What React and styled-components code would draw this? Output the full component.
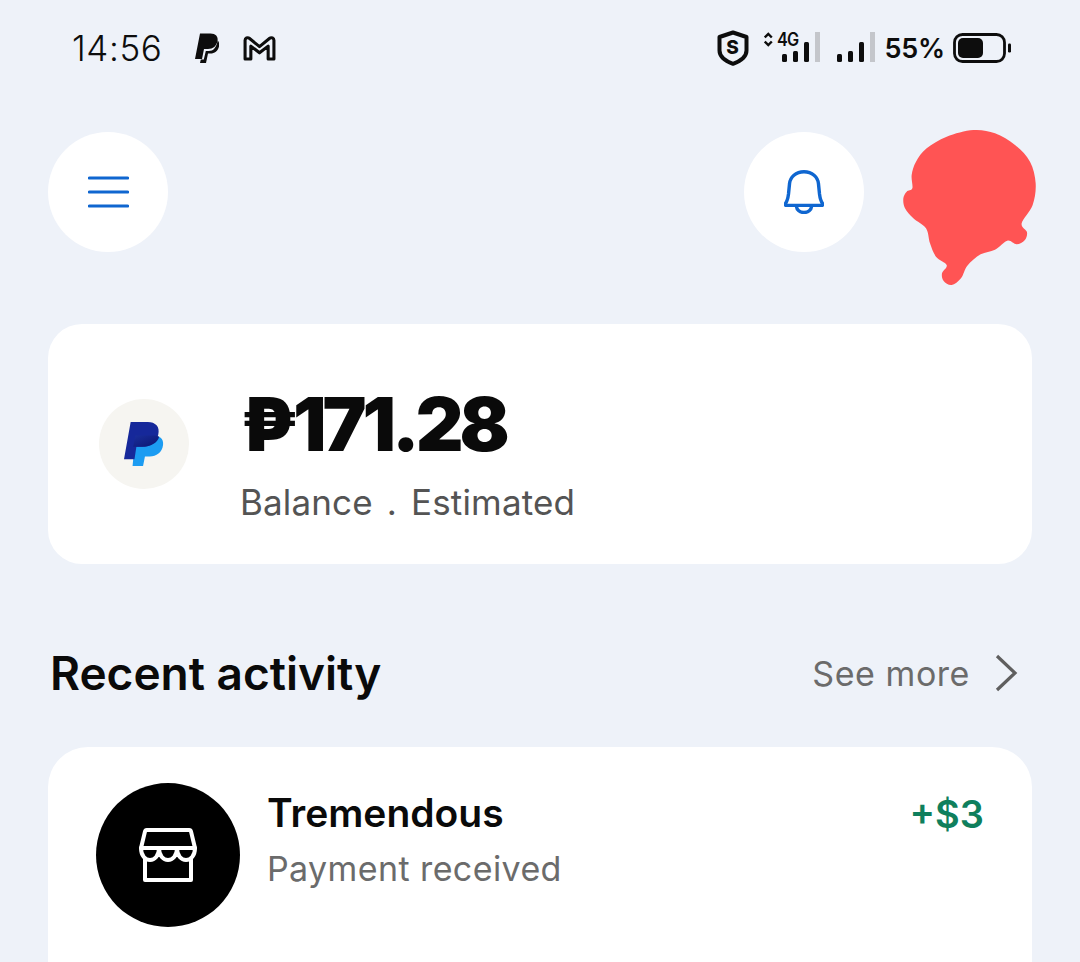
import React from "react";
import styled, { createGlobalStyle } from "styled-components";

const Global = createGlobalStyle`
  html, body { margin: 0; padding: 0; background: #eef2f9; }
  body { font-family: Inter, "Noto Sans", sans-serif; overflow: hidden; }
`;

const Screen = styled.div`
  width: 1080px;
  height: 962px;
  overflow: hidden;
  background: #eef2f9;
  display: flex;
  flex-direction: column;
`;

const StatusBar = styled.div`
  height: 96px;
  flex: none;
  display: flex;
  align-items: center;
  justify-content: space-between;
  padding: 0 68px 0 72px;
  color: #0d0d0d;
`;

const StatusLeft = styled.div`
  display: flex;
  align-items: center;
  gap: 24px;
`;

const StatusRight = styled.div`
  display: flex;
  align-items: center;
`;

const Clock = styled.span`
  font-size: 35px;
  font-weight: 300;
  letter-spacing: 0.6px;
  margin-right: 9px;
`;

const BatteryText = styled.span`
  font-size: 27px;
  font-weight: 600;
  letter-spacing: -0.2px;
  margin: 0 8px 0 10px;
`;

const Shield = styled.span`
  position: relative;
  width: 32px;
  height: 36px;
  display: flex;
  align-items: center;
  justify-content: center;
  margin-right: 15px;

  svg { position: absolute; inset: 0; }
`;

const ShieldLetter = styled.span`
  position: relative;
  font-size: 19px;
  font-weight: 800;
  line-height: 1;
  margin-top: -2px;
`;

const Network = styled.span`
  position: relative;
  width: 56px;
  height: 36px;
  margin-right: 16px;

  svg { position: absolute; inset: 0; }
`;

const NetworkLabel = styled.span`
  position: absolute;
  left: 13px;
  top: 0;
  font-size: 18px;
  font-weight: 600;
  line-height: 20px;
  letter-spacing: -1px;
  transform: scaleX(0.9);
  transform-origin: left center;
`;

const Header = styled.header`
  flex: none;
  margin-top: 36px;
  padding: 0 48px;
  display: flex;
  align-items: center;
  gap: 48px;
`;

const RoundButton = styled.button`
  width: 120px;
  height: 120px;
  flex: none;
  border: none;
  padding: 0;
  border-radius: 50%;
  background: #fff;
  display: flex;
  align-items: center;
  justify-content: center;
  margin-right: ${(p) => (p.$push ? "auto" : 0)};
`;

const AvatarSlot = styled.div`
  position: relative;
  width: 120px;
  height: 120px;
  flex: none;
`;

const Scribble = styled.svg`
  position: absolute;
  left: -32px;
  top: -17px;
`;

const BalanceCard = styled.section`
  flex: none;
  margin: 72px 48px 0;
  height: 240px;
  border-radius: 34px;
  background: #fff;
  box-sizing: border-box;
  padding: 0 0 0 51px;
  display: flex;
  align-items: center;
  gap: 52px;
`;

const LogoDisc = styled.div`
  width: 90px;
  height: 90px;
  flex: none;
  border-radius: 50%;
  background: #f6f5f1;
  display: flex;
  align-items: center;
  justify-content: center;
`;

const BalanceText = styled.div`
  display: flex;
  flex-direction: column;
  margin-top: 12px;
`;

const Amount = styled.div`
  font-size: 74px;
  font-weight: 900;
  line-height: 94px;
  letter-spacing: -4px;
  color: #0a0a0a;
`;

const BalanceNote = styled.div`
  font-size: 35px;
  line-height: 44px;
  letter-spacing: 0.15px;
  word-spacing: 4px;
  color: #545454;
  margin-top: 9px;
  margin-left: -1px;
`;

const SectionHead = styled.div`
  flex: none;
  margin-top: 81px;
  padding: 0 62px 0 50px;
  height: 56px;
  display: flex;
  align-items: center;
  justify-content: space-between;
`;

const SectionTitle = styled.h2`
  margin: 0;
  font-size: 46px;
  font-weight: 600;
  letter-spacing: 0;
  color: #0a0a0a;
`;

const SeeMore = styled.div`
  display: flex;
  align-items: center;
  gap: 24px;
  font-size: 34px;
  font-weight: 400;
  letter-spacing: 0.55px;
  color: #6b6b6b;
`;

const ActivityCard = styled.section`
  flex: none;
  margin: 46px 48px 0;
  height: 300px;
  border-radius: 40px;
  background: #fff;
  box-sizing: border-box;
  padding: 36px 48px 0;
  display: flex;
  align-items: flex-start;
  gap: 27px;
`;

const StoreDisc = styled.div`
  width: 144px;
  height: 144px;
  flex: none;
  border-radius: 50%;
  background: #000;
  display: flex;
  align-items: center;
  justify-content: center;
`;

const RowText = styled.div`
  flex: 1;
  display: flex;
  flex-direction: column;
  padding-top: 4px;
`;

const Merchant = styled.div`
  font-size: 39px;
  font-weight: 600;
  line-height: 52px;
  letter-spacing: 0;
  color: #0a0a0a;
`;

const RowDetail = styled.div`
  font-size: 34px;
  line-height: 52px;
  letter-spacing: 0.4px;
  color: #6b6b6b;
  margin-top: 4px;
`;

const Credit = styled.div`
  font-size: 38px;
  font-weight: 600;
  line-height: 52px;
  padding-top: 5px;
  color: #0f7f5c;
`;

// Closed smooth outline through a list of points (Catmull-Rom to cubic Bézier).
const smoothPath = (pts) => {
  const n = pts.length;
  let d = `M${pts[0][0]} ${pts[0][1]}`;
  for (let i = 0; i < n; i++) {
    const [p0, p1, p2, p3] = [pts[(i - 1 + n) % n], pts[i], pts[(i + 1) % n], pts[(i + 2) % n]];
    const c1 = [p1[0] + (p2[0] - p0[0]) / 6, p1[1] + (p2[1] - p0[1]) / 6];
    const c2 = [p2[0] - (p3[0] - p1[0]) / 6, p2[1] - (p3[1] - p1[1]) / 6];
    d += `C${c1[0]} ${c1[1]} ${c2[0]} ${c2[1]} ${p2[0]} ${p2[1]}`;
  }
  return d + "Z";
};

const BLOB_POINTS = [
  [280, 45], [345, 55], [405, 90], [450, 140], [467, 205], [458, 270], [425, 325],
  [441, 352], [434, 376], [410, 388], [382, 377], [345, 404], [302, 418], [262, 452],
  [243, 490], [215, 510], [191, 498], [186, 475], [200, 450], [168, 425], [150, 385],
  [138, 340], [100, 310], [75, 280], [70, 250], [80, 230], [97, 220], [95, 180],
  [108, 140], [140, 100], [200, 65],
];

const PaypalMono = () => (
  <svg width="24" height="30" viewBox="0 0 24 30" fill="#0d0d0d">
    <path d="M5 .5h10.500c5 0 8 3 7 7.500-1 5-4.500 8-9.500 8H9L7 26H0z" />
    <path d="M22.700 7.500c1.500 1.500 1.800 3.500 1.300 6-1 4.500-4.500 7-8.500 7h-2.500L11 30H5l.8-3.500h3l2-8.500h3c4.500 0 7.500-3 8.900-10.500z" />
  </svg>
);

const MailMark = () => (
  <svg width="33" height="25" viewBox="0 0 34 26" fill="none" stroke="#0d0d0d" strokeWidth="3.200" strokeLinejoin="round">
    <path d="M2 4.500C2 2.200 4.600 1 6.400 2.400L17 11l10.600-8.600C29.400 1 32 2.200 32 4.500V24h-6V10.500l-9 7-9-7V24H2z" />
  </svg>
);

const ShieldOutline = () => (
  <svg width="32" height="36" viewBox="0 0 32 36" fill="none" stroke="#0d0d0d" strokeWidth="4" strokeLinejoin="round">
    <path d="M16 2.500 29.500 7v13.500c0 6.200-5.900 10.500-13.500 13.300C8.400 31 2.500 26.700 2.500 20.500V7z" />
  </svg>
);

const Bars = ({ data, idle }) => (
  <>
    {data.map(([x, h]) => (
      <rect key={x} x={x} y={32 - h} width="5" height={h} rx="1.500" fill="#0d0d0d" />
    ))}
    <rect x={idle} y="2" width="5" height="30" fill="#c4c6cb" />
  </>
);

const DataSignal = () => (
  <Network>
    <svg width="56" height="36" viewBox="0 0 56 36">
      <path d="M.8 7.500 4.300 4l3.500 3.500M.8 11.500 4.300 15l3.500-3.500" fill="none" stroke="#0d0d0d" strokeWidth="2.400" />
      <Bars data={[[18, 8], [29, 11], [40, 20]]} idle={51} />
    </svg>
    <NetworkLabel>4G</NetworkLabel>
  </Network>
);

const Signal = () => (
  <svg width="39" height="36" viewBox="0 0 39 36">
    <Bars data={[[1, 8], [12, 11], [23, 20]]} idle={34} />
  </svg>
);

const Battery = () => (
  <svg width="59" height="30" viewBox="0 0 59 30">
    <rect x="1.500" y="1.500" width="50" height="27" rx="8" fill="none" stroke="#0d0d0d" strokeWidth="2.800" />
    <rect x="5" y="5" width="25" height="20" rx="5" fill="#0d0d0d" />
    <rect x="55" y="10.500" width="3" height="9" rx="1.200" fill="#0d0d0d" />
  </svg>
);

const MenuIcon = () => (
  <svg width="41" height="32" viewBox="0 0 41 32" stroke="#0f66d0" strokeWidth="3.200" strokeLinecap="round">
    <path d="M1.500 2h38M1.500 16h38M1.500 30h38" />
  </svg>
);

const BellIcon = () => (
  <svg width="40" height="44" viewBox="0 0 40 44" fill="none" stroke="#0f66d0" strokeWidth="3.400" strokeLinejoin="round">
    <path d="M20 1.800C28 1.800 34 7 34.500 14l1 10c.5 4 1.500 7.500 3.100 9.500a1.200 1.200 0 0 1-1 1.900H2.400a1.200 1.200 0 0 1-1-1.900C3 31.500 4 28 4.500 24l1-10C6 7 12 1.800 20 1.800z" />
    <path d="M12.300 36c.5 4 3.500 6.500 7.700 6.500s7.200-2.500 7.700-6.500" />
  </svg>
);

const Blob = () => (
  <Scribble width="180" height="185" viewBox="0 0 540 555">
    <path fill="#ff5454" d={smoothPath(BLOB_POINTS)} />
  </Scribble>
);

const PaypalColor = () => (
  <svg width="40" height="46" viewBox="0 0 42 48">
    <defs>
      <linearGradient id="ppOverlap" x1="0" y1="0" x2="1" y2="1">
        <stop offset="0" stopColor="#1a2f9c" />
        <stop offset="1" stopColor="#0b1470" />
      </linearGradient>
    </defs>
    <path fill="#1c9cf2" d="M12 15h18c7 0 12 3 11 10-1 8-7 12-14 12h-5l-2 10H9z" />
    <path fill="#16289a" d="M7 1h18c8 0 13 5 11 13-2 9-9 13-17 13h-6l-2 13H0z" />
    <path fill="url(#ppOverlap)" d="M12 15h18c3 0 5 .500 7 1.500C35 23 28 27 19 27h-9.500z" />
  </svg>
);

const Chevron = () => (
  <svg width="24" height="40" viewBox="0 0 24 40" fill="none" stroke="#5f5f5f" strokeWidth="3.200">
    <path d="M3 3l18 17L3 37" />
  </svg>
);

const StoreIcon = () => (
  <svg width="58" height="54" viewBox="0 0 58 54" fill="none" stroke="#fff" strokeWidth="4" strokeLinejoin="round" strokeLinecap="round">
    <path d="M8 2h42a2 2 0 0 1 2 1.500L56 20H2L6 3.500A2 2 0 0 1 8 2z" />
    <path d="M2 20c0 16 18 16 18 0 0 16 18 16 18 0 0 16 18 16 18 0" />
    <path d="M6 31v21h46V31" />
  </svg>
);

export default function App() {
  return (
    <Screen>
      <Global />
      <StatusBar>
        <StatusLeft>
          <Clock>14:56</Clock>
          <PaypalMono />
          <MailMark />
        </StatusLeft>
        <StatusRight>
          <Shield>
            <ShieldOutline />
            <ShieldLetter>S</ShieldLetter>
          </Shield>
          <DataSignal />
          <Signal />
          <BatteryText>55%</BatteryText>
          <Battery />
        </StatusRight>
      </StatusBar>

      <Header>
        <RoundButton $push aria-label="Menu">
          <MenuIcon />
        </RoundButton>
        <RoundButton aria-label="Notifications">
          <BellIcon />
        </RoundButton>
        <AvatarSlot>
          <Blob />
        </AvatarSlot>
      </Header>

      <BalanceCard>
        <LogoDisc>
          <PaypalColor />
        </LogoDisc>
        <BalanceText>
          <Amount>₱171.28</Amount>
          <BalanceNote>Balance . Estimated</BalanceNote>
        </BalanceText>
      </BalanceCard>

      <SectionHead>
        <SectionTitle>Recent activity</SectionTitle>
        <SeeMore>
          See more
          <Chevron />
        </SeeMore>
      </SectionHead>

      <ActivityCard>
        <StoreDisc>
          <StoreIcon />
        </StoreDisc>
        <RowText>
          <Merchant>Tremendous</Merchant>
          <RowDetail>Payment received</RowDetail>
        </RowText>
        <Credit>+$3</Credit>
      </ActivityCard>
    </Screen>
  );
}
